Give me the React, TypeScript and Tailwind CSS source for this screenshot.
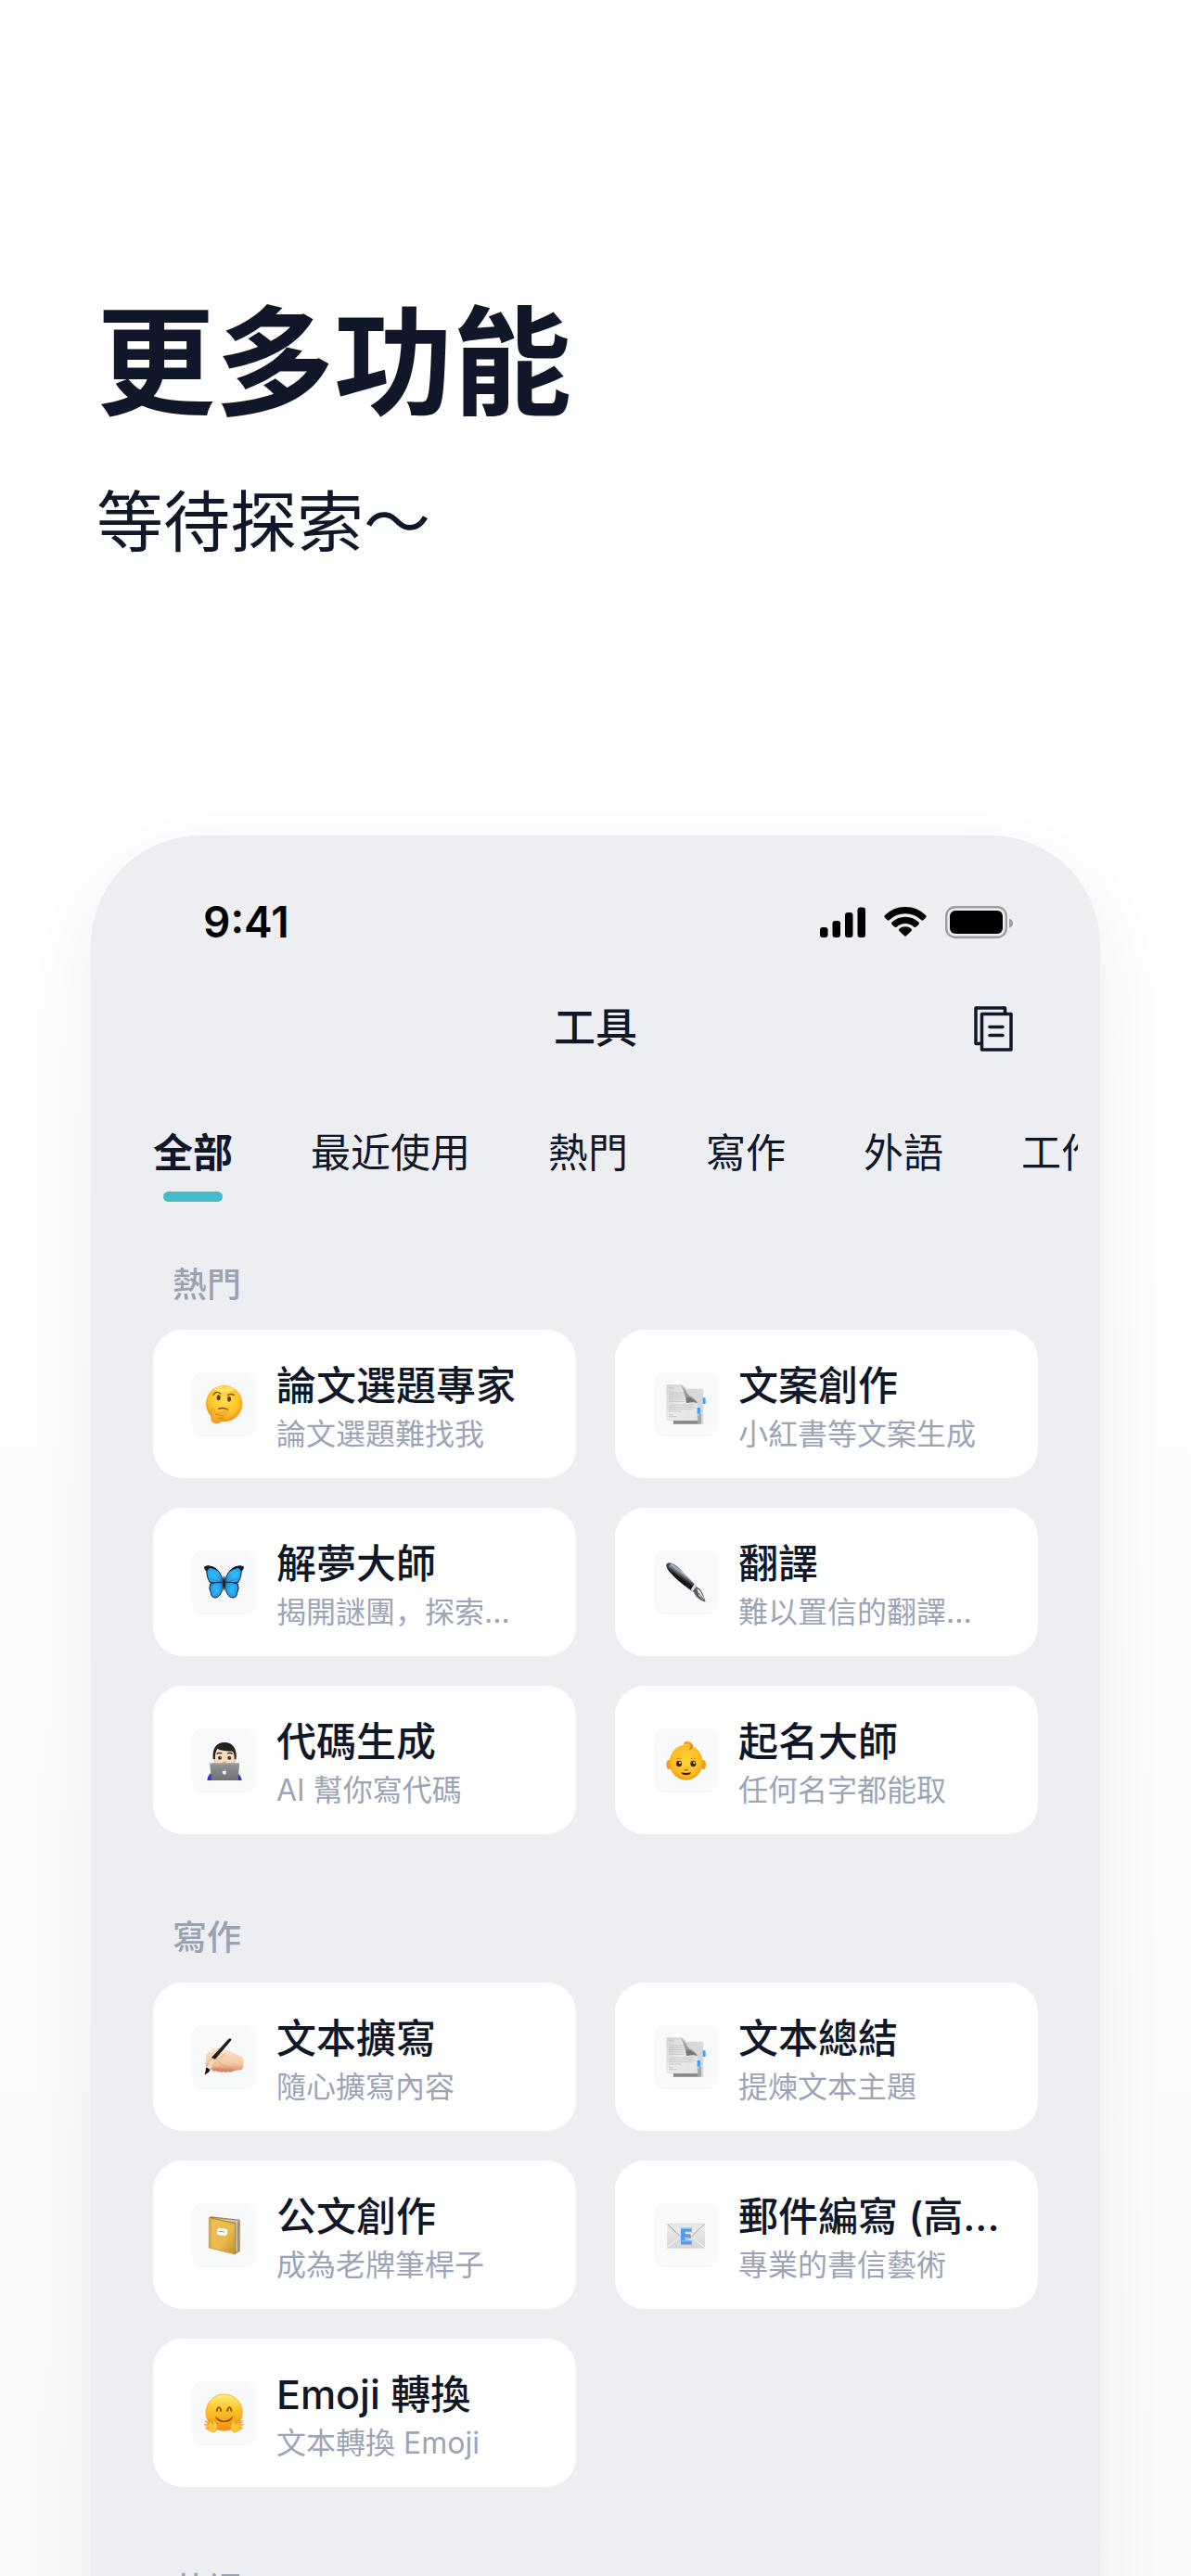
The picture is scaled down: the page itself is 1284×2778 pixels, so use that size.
import type { ReactNode } from "react";

const Svg = ({ children }: { children: ReactNode }) => (
  <svg viewBox="0 0 129 129" className="h-[43px] w-[43px]" aria-hidden="true">
    {children}
  </svg>
);

const Thinking = () => (
  <Svg>
    <defs>
      <radialGradient id="thinkFace" cx="0.5" cy="0.4" r="0.62">
        <stop offset="0" stopColor="#ffe14a" />
        <stop offset="0.65" stopColor="#fdc32b" />
        <stop offset="1" stopColor="#f08a12" />
      </radialGradient>
      <linearGradient id="thinkHand" x1="0" y1="0" x2="0" y2="1">
        <stop offset="0" stopColor="#ffc94a" />
        <stop offset="1" stopColor="#f39a1c" />
      </linearGradient>
    </defs>
    <circle cx="65" cy="62" r="59" fill="url(#thinkFace)" />
    <ellipse cx="65" cy="16" rx="32" ry="9" fill="#fff08a" opacity="0.6" />
    <path d="M30 34Q40 19 53 30" fill="none" stroke="#7a4a0c" strokeWidth="4" strokeLinecap="round" />
    <path d="M77 34Q88 29 97 34" fill="none" stroke="#7a4a0c" strokeWidth="4" strokeLinecap="round" />
    <ellipse cx="47" cy="43" rx="6" ry="9" fill="#6b3f0d" />
    <ellipse cx="81" cy="47" rx="6" ry="9" fill="#6b3f0d" />
    <path d="M47 79Q60 73 77 81" fill="none" stroke="#7a4a0c" strokeWidth="4" strokeLinecap="round" />
    <path
      d="M25 80Q31 76 34 84L37 97Q52 93 71 85Q79 83 79 88Q78 93 62 100Q66 106 60 114Q53 126 37 125Q24 123 23 110Q25 95 25 80Z"
      fill="url(#thinkHand)"
      stroke="#dc8210"
      strokeWidth="2"
    />
    <path d="M38 98Q50 100 62 100M44 108Q53 111 61 108" fill="none" stroke="#c9700c" strokeWidth="2" />
  </Svg>
);

const Papers = () => (
  <Svg>
    <defs>
      <linearGradient id="paperFront" x1="0" y1="0" x2="1" y2="1">
        <stop offset="0" stopColor="#d2d2d2" />
        <stop offset="0.5" stopColor="#ececec" />
        <stop offset="1" stopColor="#e2e2e2" />
      </linearGradient>
      <linearGradient id="paperCurl" x1="0" y1="1" x2="1" y2="0">
        <stop offset="0" stopColor="#6f6f6f" />
        <stop offset="0.45" stopColor="#9a9a9a" />
        <stop offset="0.6" stopColor="#f4f4f4" />
        <stop offset="1" stopColor="#cfcfcf" />
      </linearGradient>
    </defs>
    <path d="M60 14H121V128H24V114H102V90H60Z" fill="#d8d8d8" />
    <rect x="24" y="116" width="80" height="12" fill="#858585" />
    <path d="M102 100L114 94V128H102Z" fill="#a8a8a8" />
    <path d="M2 1H50Q64 4 66 26Q68 42 80 46Q96 48 102 60V117H2Z" fill="url(#paperFront)" stroke="#d0d0d0" />
    <path d="M46 1Q62 3 66 20Q68 36 84 38Q98 42 102 60Q90 55 66 60Q64 30 46 1Z" fill="url(#paperCurl)" />
    <path d="M66 60Q64 50 66 41Q90 42 102 60Q88 54 66 60Z" fill="#777" />
    <path
      d="M9 11H24M9 27H60M9 34H61M9 41H62M9 48H62M9 55H58M9 66H92M9 73H92M9 80H86M9 87H50M9 98H22M9 104H35"
      stroke="#b2b2b2"
      strokeWidth="2"
    />
    <rect x="119" y="43" width="9" height="20" rx="1" fill="#41a2fb" />
    <rect x="101" y="75" width="10" height="20" rx="1" fill="#41a2fb" />
  </Svg>
);

const Butterfly = () => (
  <Svg>
    <defs>
      <radialGradient id="wing" cx="0.5" cy="0.5" r="0.6">
        <stop offset="0" stopColor="#37c3fa" />
        <stop offset="0.7" stopColor="#219df0" />
        <stop offset="1" stopColor="#0b6fc4" />
      </radialGradient>
    </defs>
    <g stroke="#141c28" strokeWidth="3" strokeLinejoin="round" fill="url(#wing)">
      <path d="M62 62Q54 25 28 14Q10 8 2 14Q1 22 8 28Q8 46 18 64Q40 70 62 68Z" />
      <path d="M67 62Q75 25 101 14Q119 8 127 14Q128 22 121 28Q121 46 111 64Q89 70 67 68Z" />
      <path d="M62 64Q38 62 20 69Q14 84 22 98Q22 112 36 114Q54 114 61 80Z" />
      <path d="M67 64Q91 62 109 69Q115 84 107 98Q107 112 93 114Q75 114 68 80Z" />
    </g>
    <path d="M2 14Q16 9 32 16Q44 24 50 32Q36 20 18 18Q14 20 9 29Q3 23 2 14Z" fill="#151a22" />
    <path d="M127 14Q113 9 97 16Q85 24 79 32Q93 20 111 18Q115 20 120 29Q126 23 127 14Z" fill="#151a22" />
    <path d="M61 64L30 30M61 66L20 52M60 72L27 94M60 74L40 106M68 64L99 30M68 66L109 52M69 72L102 94M69 74L89 106" stroke="#0d70bd" strokeWidth="1" />
    <path d="M63 44L57 16M66 44L72 16" stroke="#b9bec5" strokeWidth="1" />
    <path d="M64.5 43Q70 54 67 72Q68 86 64.5 94Q61 86 62 72Q59 54 64.5 43Z" fill="#242220" />
  </Svg>
);

const Pen = () => (
  <Svg>
    <defs>
      <linearGradient id="penBody" x1="0.65" y1="0.3" x2="0.35" y2="0.7">
        <stop offset="0" stopColor="#17191c" />
        <stop offset="0.2" stopColor="#b4bbc3" />
        <stop offset="0.4" stopColor="#63686f" />
        <stop offset="0.6" stopColor="#15171a" />
        <stop offset="1" stopColor="#050607" />
      </linearGradient>
    </defs>
    <path d="M2 5Q7-1 20 3Q39 12 59 35L92 69L101 82L86 94L69 82Q35 58 12 31Q-2 15 2 5Z" fill="url(#penBody)" />
    <path d="M2 5Q7-1 18 3Q10 7 5 17Q0 9 2 5Z" fill="#254d64" />
    <path d="M92 69L101 82L86 94L80 88Z" fill="#d6d9dd" />
    <path d="M98 79Q113 86 119 101L128 127Q106 121 96 108Q94 97 87 93Z" fill="#555b60" />
    <path d="M100 84Q112 90 119 108L126 124L107 108Z" fill="#e5ebef" />
    <path d="M89 94L98 108Q109 119 125 126" fill="none" stroke="#93704c" strokeWidth="3" />
    <path d="M105 98L125 124" stroke="#24282b" strokeWidth="2" />
  </Svg>
);

const Coder = () => (
  <Svg>
    <defs>
      <linearGradient id="laptop" x1="0" y1="0" x2="0" y2="1">
        <stop offset="0" stopColor="#929497" />
        <stop offset="1" stopColor="#6f7174" />
      </linearGradient>
    </defs>
    <path d="M10 129Q12 112 22 106H108Q119 112 122 129Z" fill="#2b35cb" />
    <path d="M34 40Q34 18 66 18Q100 18 100 42V64Q98 80 82 86H50Q36 82 33 66Z" fill="#f8dcc0" />
    <path d="M33 60Q38 61 37 72Q31 70 32 62ZM101 60Q95 61 97 72Q103 70 102 62Z" fill="#e8b994" />
    <path d="M29 60Q25 7 66 6Q107 7 104 60L98 61Q99 44 93 35Q62 35 43 27Q34 40 36 61Z" fill="#242221" />
    <path d="M41 43Q49 38 58 42M75 42Q84 38 92 43" fill="none" stroke="#2b211d" strokeWidth="4" />
    <ellipse cx="51" cy="56" rx="6" ry="6" fill="#3f2411" />
    <ellipse cx="82" cy="56" rx="6" ry="6" fill="#3f2411" />
    <circle cx="53" cy="54" r="1.6" fill="#fff" />
    <circle cx="84" cy="54" r="1.6" fill="#fff" />
    <path d="M61 69Q66 72 72 69" fill="none" stroke="#d19470" strokeWidth="3" />
    <path d="M22 73H111Q114 73 114 77L110 129H24L19 77Q19 73 22 73Z" fill="url(#laptop)" />
    <path d="M20 75H113" stroke="#b5b6b8" strokeWidth="2" />
    <path d="M66 100Q60 96 60 103Q61 110 66 109Q71 110 71 104Q68 103 71 99Q69 97 66 100ZM66 98Q66 94 69 93" fill="#fff" stroke="#fff" />
  </Svg>
);

const Baby = () => (
  <Svg>
    <defs>
      <radialGradient id="babyFace" cx="0.5" cy="0.45" r="0.6">
        <stop offset="0" stopColor="#ffd43b" />
        <stop offset="0.7" stopColor="#fdbd22" />
        <stop offset="1" stopColor="#ea8c0c" />
      </radialGradient>
    </defs>
    <ellipse cx="9" cy="78" rx="8" ry="16" fill="#f2a116" />
    <ellipse cx="121" cy="78" rx="8" ry="16" fill="#f2a116" />
    <ellipse cx="65" cy="71" rx="54" ry="57" fill="url(#babyFace)" />
    <path d="M58 16Q54 3 68 2Q85 3 86 17Q85 30 74 29Q82 22 76 15Q67 9 58 16Z" fill="#f3a41f" />
    <path d="M76 29Q88 24 83 12" fill="none" stroke="#a85f0c" strokeWidth="2.5" />
    <path d="M34 60Q42 55 50 59M80 59Q88 55 96 60" fill="none" stroke="#d98a12" strokeWidth="3" />
    <ellipse cx="42" cy="75" rx="9" ry="10" fill="#40240b" />
    <ellipse cx="88" cy="75" rx="9" ry="10" fill="#40240b" />
    <circle cx="45" cy="72" r="3" fill="#fff" />
    <circle cx="91" cy="72" r="3" fill="#fff" />
    <path d="M59 93Q65 99 71 93" fill="none" stroke="#bd6a08" strokeWidth="4" />
    <path d="M49 103Q65 107 81 103Q79 112 65 112Q51 112 49 103Z" fill="#3a1c08" />
  </Svg>
);

const WritingHand = () => (
  <Svg>
    <defs>
      <linearGradient id="hand" x1="0" y1="0" x2="0" y2="1">
        <stop offset="0" stopColor="#fde3c8" />
        <stop offset="0.6" stopColor="#f6cba7" />
        <stop offset="1" stopColor="#d98a5f" />
      </linearGradient>
    </defs>
    <path
      d="M8 53Q20 40 47 35Q64 33 77 44Q100 52 124 64Q129 78 127 94Q126 105 116 106Q102 106 92 111Q83 115 77 111Q70 117 63 111Q56 117 50 110Q42 116 38 107Q33 114 27 107L5 93Q4 70 8 53Z"
      fill="url(#hand)"
    />
    <path d="M27 70Q10 78 6 93M35 82Q52 76 60 91Q76 101 92 98M36 72Q60 67 66 52" fill="none" stroke="#dba27c" strokeWidth="2" />
    <path d="M32 99L90 101L100 107L78 112L28 107Z" fill="#c9774e" opacity="0.45" />
    <path d="M80 6Q85 3 88 8L36 70L25 66Z" fill="#151515" stroke="#151515" strokeWidth="2" />
    <path d="M7 97L20 104L16 112L2 122Z" fill="#151515" />
    <path d="M10 97L24 74L33 79L20 104Z" fill="#fbdabb" />
    <path d="M38 60L70 20" stroke="#4d4d4d" strokeWidth="2" />
  </Svg>
);

const Notebook = () => (
  <Svg>
    <defs>
      <linearGradient id="cover" x1="0" y1="0" x2="1" y2="1">
        <stop offset="0" stopColor="#eec054" />
        <stop offset="0.6" stopColor="#e8b94b" />
        <stop offset="1" stopColor="#c98f1e" />
      </linearGradient>
    </defs>
    <path d="M16 8L22 4L116 14V116L100 126Z" fill="#a87a1f" />
    <path d="M24 8L112 17V114L102 120V24Z" fill="#c9c9cb" />
    <path d="M104 26L112 18V112L104 119Z" fill="#8b8b8e" />
    <path d="M107 22V116" stroke="#e8e8e8" strokeWidth="2" />
    <path d="M16 8L94 25Q101 26 101 32V126L16 105Z" fill="url(#cover)" stroke="#b48325" strokeWidth="2" />
    <path d="M21 11V105" stroke="#b98a28" strokeWidth="2" />
    <rect x="42" y="42" width="33" height="23" rx="8" fill="#fff" transform="rotate(8 58 53)" />
    <path d="M48 51L54 53L59 52L67 55" fill="none" stroke="#8e8e8e" strokeWidth="3" />
  </Svg>
);

const Email = () => (
  <Svg>
    <defs>
      <linearGradient id="envelope" x1="0" y1="0" x2="0" y2="1">
        <stop offset="0" stopColor="#eeeeee" />
        <stop offset="1" stopColor="#d6d6d6" />
      </linearGradient>
    </defs>
    <rect x="3" y="26" width="123" height="81" rx="2" fill="url(#envelope)" />
    <path d="M3 105L48 67M126 105L81 67" stroke="#f8f8f8" strokeWidth="3" />
    <path d="M3 27L50 72Q64 84 79 72L126 27" fill="#e8e8e8" stroke="#9b9b9b" strokeWidth="2.5" />
    <path d="M4 26H125V29H4Z" fill="#dedede" />
    <path d="M49 44H84V55H62V64H81V74H62V84H84V96H49Z" fill="#7b7b7b" opacity="0.45" />
    <path d="M48 41H82V52H61V61H79V71H61V82H82V93H48Z" fill="#4f9df3" />
    <path d="M48 41H82V45H48ZM48 82H82V85H48Z" fill="#7fbcff" />
  </Svg>
);

const Hugging = () => (
  <Svg>
    <defs>
      <linearGradient id="hugFace" x1="0" y1="0" x2="0" y2="1">
        <stop offset="0" stopColor="#ffee7a" />
        <stop offset="0.4" stopColor="#fdc72c" />
        <stop offset="1" stopColor="#f38b13" />
      </linearGradient>
    </defs>
    <circle cx="65" cy="62" r="59" fill="url(#hugFace)" stroke="#f19a18" strokeWidth="2" />
    <path d="M41 57Q48 33 55 57M75 57Q82 33 89 57" fill="none" stroke="#7a4a0c" strokeWidth="5" strokeLinecap="round" />
    <path d="M38 77Q65 103 92 77Q86 92 65 92Q44 92 38 77Z" fill="#7a420b" stroke="#7a420b" strokeWidth="2" />
    <path
      d="M28 101Q25 88 33 88Q40 94 44 106Q46 119 32 126Q18 124 4 112L16 112L1 100L15 102L3 89L18 97L14 85Q23 90 28 101Z"
      fill="#ffcb36"
      stroke="#df8312"
      strokeWidth="2"
    />
    <path
      d="M101 101Q104 88 96 88Q89 94 85 106Q83 119 97 126Q111 124 125 112L113 112L128 100L114 102L126 89L111 97L115 85Q106 90 101 101Z"
      fill="#ffcb36"
      stroke="#df8312"
      strokeWidth="2"
    />
  </Svg>
);

const tabs = ["全部", "最近使用", "熱門", "寫作", "外語", "工作"];

const sections = [
  {
    title: "熱門",
    tools: [
      { icon: <Thinking />, name: "論文選題專家", desc: "論文選題難找我" },
      { icon: <Papers />, name: "文案創作", desc: "小紅書等文案生成" },
      { icon: <Butterfly />, name: "解夢大師", desc: "揭開謎團，探索..." },
      { icon: <Pen />, name: "翻譯", desc: "難以置信的翻譯..." },
      { icon: <Coder />, name: "代碼生成", desc: "AI 幫你寫代碼" },
      { icon: <Baby />, name: "起名大師", desc: "任何名字都能取" },
    ],
  },
  {
    title: "寫作",
    tools: [
      { icon: <WritingHand />, name: "文本擴寫", desc: "隨心擴寫內容" },
      { icon: <Papers />, name: "文本總結", desc: "提煉文本主題" },
      { icon: <Notebook />, name: "公文創作", desc: "成為老牌筆桿子" },
      { icon: <Email />, name: "郵件編寫 (高...", desc: "專業的書信藝術" },
      { icon: <Hugging />, name: "Emoji 轉換", desc: "文本轉換 Emoji" },
    ],
  },
  { title: "英語", tools: [] },
];

const StatusBar = () => (
  <div className="flex h-[138px] items-center justify-between pl-[97px] pr-[70px]">
    <span className="text-[46px] leading-none font-semibold text-black">9:41</span>
    <div className="flex items-center gap-5">
      <svg viewBox="0 0 49 33" className="h-[33px] w-[49px]" aria-hidden="true">
        <rect x="0" y="22" width="8.5" height="11" rx="3" />
        <rect x="13.5" y="15" width="8.5" height="18" rx="3" />
        <rect x="27" y="6" width="8.5" height="27" rx="3" />
        <rect x="40.5" y="0.5" width="8.5" height="32.5" rx="3" />
      </svg>
      <svg viewBox="0 0 136 96" className="h-[32px] w-[46px]" aria-hidden="true">
        <path d="M68 0Q107 0 135 28Q137 31 135 34L126 43Q123 45 120 43Q98 22 68 22Q38 22 16 43Q13 45 10 43L1 34Q-1 31 1 28Q29 0 68 0Z" />
        <path d="M68 32Q94 32 112 50Q114 53 112 56L102 65Q99 67 96 65Q84 54 68 54Q52 54 40 65Q37 67 34 65L24 56Q22 53 24 50Q42 32 68 32Z" />
        <path d="M68 64Q80 64 88 71Q90 74 88 77L71 94Q68 96 65 94L48 77Q46 74 48 71Q56 64 68 64Z" />
      </svg>
      <svg viewBox="0 0 73 35" className="h-[35px] w-[73px]" aria-hidden="true">
        <rect x="1.2" y="1.2" width="64.6" height="32.6" rx="9.5" fill="none" stroke="#9d9ea1" strokeWidth="2.4" />
        <rect x="5" y="5" width="57" height="25" rx="6" />
        <path d="M69 13.5Q73 15 73 18.5Q73 22 69 23.5Z" fill="#9d9ea1" />
      </svg>
    </div>
  </div>
);

const App = () => {
  return (
    <main className="flex h-screen flex-col overflow-hidden bg-linear-to-b from-white via-[#fcfdfd] to-[#f8f9fb] font-['Inter','Noto_Sans_CJK_SC',sans-serif] text-[#101729]">
      <header className="px-[104px] pt-[317px]">
        <h1 className="text-[128px] leading-[150px] font-bold">更多功能</h1>
        <p className="mt-[46px] text-[72px] leading-[100px]">等待探索～</p>
      </header>

      <div className="mx-[98px] mt-72 shrink-0 rounded-t-[118px] bg-[#edeef2] p-6 shadow-[0_32px_80px_rgba(20,50,30,0.06)]">
        <StatusBar />

        <div className="grid h-[92px] grid-cols-[1fr_auto_1fr] items-center px-[70px]">
          <h2 className="col-start-2 text-[45px] leading-[60px] font-medium">工具</h2>
          <button type="button" aria-label="歷史記錄" className="justify-self-end">
            <svg viewBox="0 0 42 49" className="h-[49px] w-[42px]" fill="none" stroke="#101729" strokeWidth="3.5" strokeLinejoin="round" strokeLinecap="round">
              <path d="M7.5 40.5H2V2H33.5V8" />
              <rect x="8.5" y="8.5" width="31.5" height="38.5" />
              <path d="M17 22.5H31M17 31.5H31" />
            </svg>
          </button>
        </div>

        <nav className="flex gap-[84px] overflow-hidden pt-[58px] pl-[43px]">
          {tabs.map((tab, i) => (
            <button key={tab} type="button" className="flex shrink-0 flex-col items-center gap-3">
              <span className={`text-[43px] leading-[60px] whitespace-nowrap ${i === 0 ? "font-bold" : "font-normal"}`}>{tab}</span>
              {i === 0 && <span className="h-[11px] w-16 rounded-full bg-[#44bcc8]"></span>}
            </button>
          ))}
        </nav>

        <div className="flex flex-col gap-[84px] px-[43px] pt-[62px]">
          {sections.map((section) => (
            <section key={section.title}>
              <h3 className="mb-5 pl-[21px] text-[37px] leading-[56px] font-medium text-[#98a2b4]">{section.title}</h3>
              <div className="grid grid-cols-2 gap-x-[42px] gap-y-8">
                {section.tools.map((tool) => (
                  <button key={tool.name} type="button" className="flex h-40 items-center gap-[22px] rounded-[32px] bg-white px-[42px] text-left">
                    <span className="flex h-[69px] w-[69px] shrink-0 items-center justify-center rounded-[11px] bg-[#f8f9fb]">
                      {tool.icon}
                    </span>
                    <span className="flex min-w-0 flex-col pt-2 whitespace-nowrap">
                      <span className="text-[43px] leading-[58px] font-medium">{tool.name}</span>
                      <span className="text-[32px] leading-[48px] text-[#9ba5b7]">{tool.desc}</span>
                    </span>
                  </button>
                ))}
              </div>
            </section>
          ))}
        </div>
      </div>
    </main>
  );
};

export default App;
